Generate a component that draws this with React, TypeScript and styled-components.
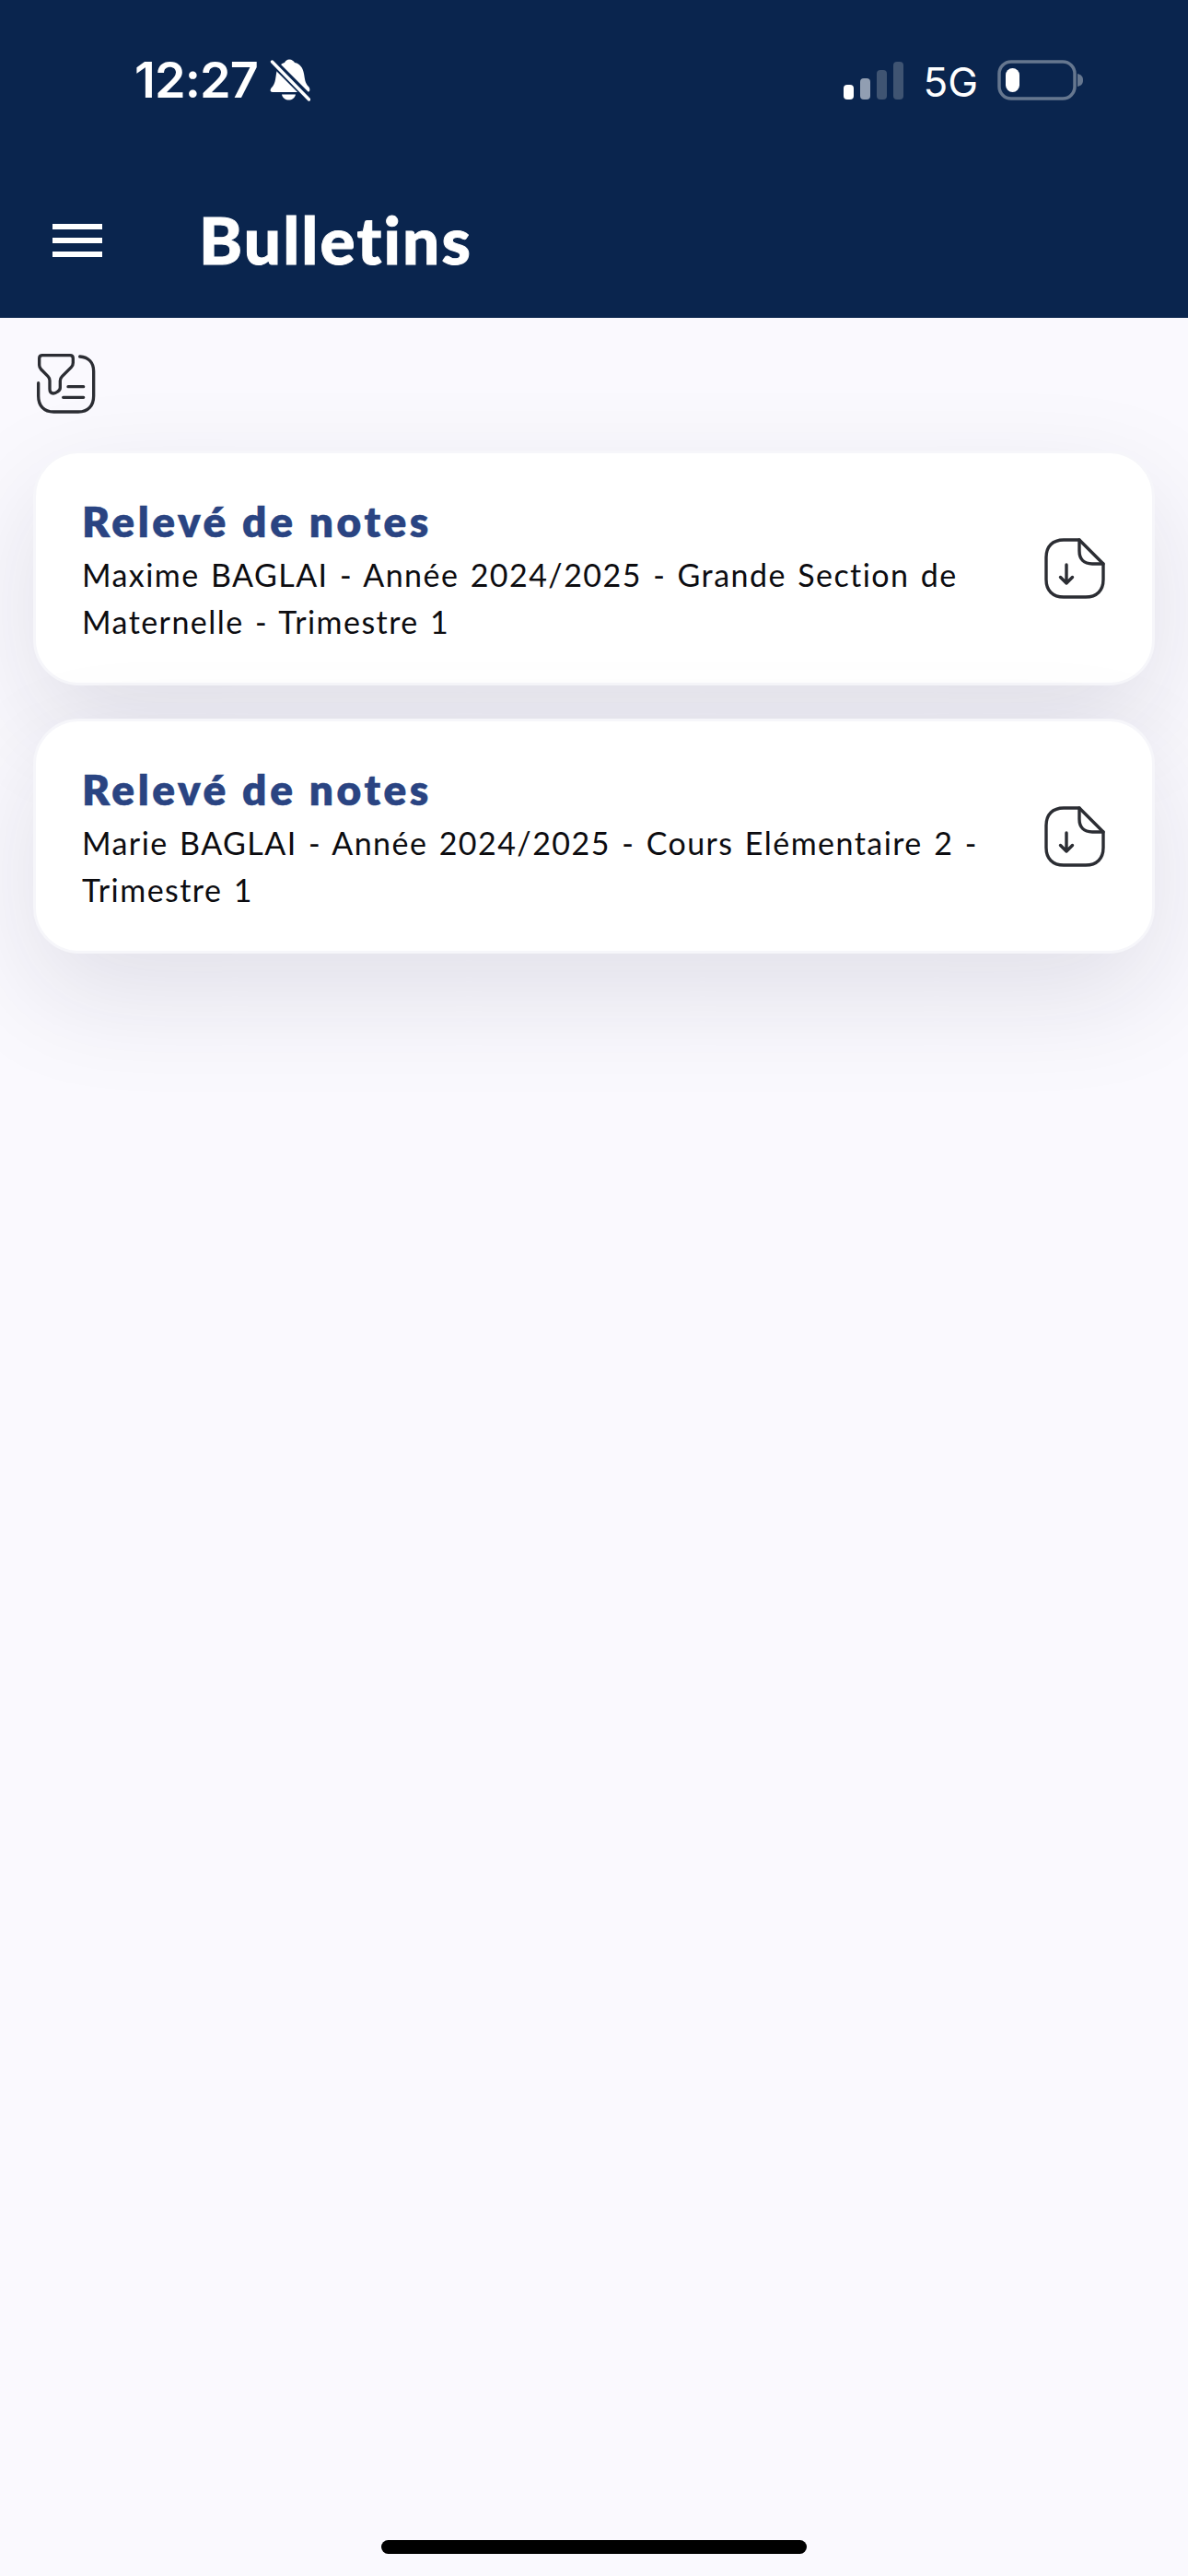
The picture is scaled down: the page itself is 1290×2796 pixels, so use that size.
import React from "react";
import styled, { createGlobalStyle } from "styled-components";

const Global = createGlobalStyle`
  html, body { margin: 0; padding: 0; background: #faf9fe; }
  body { font-family: "Lato", "Noto Sans", sans-serif; }
  * { box-sizing: border-box; }
`;

const Page = styled.div`
  width: 1290px;
  height: 2796px;
  display: flex;
  flex-direction: column;
  background: #faf9fe;
  overflow: hidden;
`;

const Header = styled.header`
  height: 345px;
  flex: none;
  background: #0a254e;
  display: flex;
  flex-direction: column;
`;

const StatusBar = styled.div`
  height: 172px;
  flex: none;
  padding: 60px 113px 0 146px;
  display: flex;
  justify-content: space-between;
  align-items: flex-start;
  color: #fff;
`;

const StatusGroup = styled.div`
  display: flex;
  align-items: center;
  height: 54px;
`;

const Time = styled.span`
  font-family: "Inter", sans-serif;
  font-size: 54px;
  font-weight: 600;
  line-height: 54px;
  letter-spacing: -0.9px;
  margin-right: 13px;
`;

const Signal = styled.div`
  display: flex;
  align-items: flex-end;
  gap: 7px;
  height: 42px;
  margin-right: 21px;
`;

const Bar = styled.span<{ $h: number; $c: string }>`
  width: 11px;
  height: ${(p) => p.$h}px;
  border-radius: 4px;
  background: ${(p) => p.$c};
`;

const Network = styled.span`
  font-family: "Inter", sans-serif;
  font-size: 44px;
  font-weight: 400;
  line-height: 54px;
  padding-top: 3px;
  margin-right: 21px;
`;

const Toolbar = styled.div`
  flex: 1;
  display: flex;
  align-items: flex-start;
  padding-top: 71px;
  padding-left: 57px;
`;

const Burger = styled.div`
  width: 54px;
  height: 36px;
  display: flex;
  flex-direction: column;
  justify-content: space-between;
  margin-right: 105px;
`;

const BurgerLine = styled.span`
  display: block;
  height: 6px;
  background: #fff;
`;

const Title = styled.h1`
  margin: -25px 0 0;
  color: #fff;
  font-family: "Lato", sans-serif;
  font-weight: 900;
  font-size: 71px;
  line-height: 84px;
  letter-spacing: 2.2px;
  -webkit-text-stroke: 1px #fff;
`;

const Main = styled.main`
  flex: 1;
  padding: 39px 36px 0;
  display: flex;
  flex-direction: column;
`;

const FilterButton = styled.div`
  width: 64px;
  height: 66px;
  margin: 0 0 39px 4px;
`;

const List = styled.div`
  display: flex;
  flex-direction: column;
  gap: 36px;
`;

const Card = styled.article`
  height: 255px;
  background: #fff;
  border: 3px solid #f6f6fa;
  border-radius: 50px;
  padding: 0 51px 0 50px;
  display: flex;
  align-items: center;
  justify-content: space-between;
  box-shadow: 0 44px 120px rgba(30, 30, 60, 0.115);
`;

const CardText = styled.div`
  width: 1000px;
  padding-top: 3px;
`;

const CardTitle = styled.div`
  color: #2a4482;
  font-weight: 800;
  font-size: 46px;
  line-height: 59px;
  letter-spacing: 3.6px;
  -webkit-text-stroke: 0.5px #2a4482;
`;

const CardSub = styled.div`
  color: #0c0c10;
  font-size: 34px;
  line-height: 51px;
  letter-spacing: 1.45px;
  word-spacing: 2.2px;
  margin-top: 3px;
`;

const HomeBar = styled.div`
  width: 462px;
  height: 15px;
  border-radius: 8px;
  background: #000;
  margin: 0 auto 24px;
  flex: none;
`;

const BellIcon = () => (
  <svg width="44" height="46" viewBox="0 0 44 46">
    <path
      d="M21 0.500c3 0 5 2 6 3.500 6 1 9 6 10 12 1 5 1 10 5 14 2 2 2 6-1 6H3c-3 0-3-3-1-5 4-4 4-9 5-15C8 9 12 5 16 4c1-2 3-3.500 5-3.500z"
      fill="#fff"
    />
    <path d="M13 38.500h15c-1 4-4 6-7.500 6s-6.500-2-7.500-6z" fill="#fff" />
    <path d="M0 0l44 44" stroke="#0a254e" strokeWidth="8.500" />
    <path d="M2.500 3l40 41" stroke="#fff" strokeWidth="3.400" strokeLinecap="round" />
  </svg>
);

const Battery = () => (
  <svg width="94" height="44" viewBox="0 0 94 44">
    <rect x="2" y="2" width="82" height="40" rx="13" fill="none" stroke="#66778f" strokeWidth="3.500" />
    <rect x="9" y="9" width="15" height="26" rx="7.500" fill="#fff" />
    <path d="M87 15c4 1 6 3 6 7s-2 6-6 7z" fill="#66778f" />
  </svg>
);

const FilterIcon = () => (
  <svg width="64" height="66" viewBox="60 44 192 196" fill="none" stroke="#2b2d33" strokeWidth="10" strokeLinecap="round" strokeLinejoin="round">
    <path d="M76 48h92q10 0 10 10v14q0 9-6 15l-30 30q-6 6-6 14v22q0 8-8 13q-8 6-14 6q-12 0-12-14v-28q0-8-6-14l-22-22q-6-6-6-14v-22q0-10 10-10z" />
    <path d="M200 52c28 2 45 20 45 48v80c0 32-18 52-50 52h-80c-32 0-50-20-50-52v-42" />
    <path d="M162 150h50M146 185h66" />
  </svg>
);

const DocIcon = () => (
  <svg width="66" height="66" viewBox="0 0 66 66" fill="none" stroke="#2b2d33" strokeWidth="3.400" strokeLinecap="round" strokeLinejoin="round">
    <path d="M38 2H21C9 2 2 9 2 21v24c0 12 7 19 19 19h24c12 0 19-7 19-19V28z" />
    <path d="M38 2v12c0 9 5 14 14 14h12" />
    <path d="M24 29v20M17.500 42.500L24 49l6.500-6.500" />
  </svg>
);

const cards = [
  "Maxime BAGLAI - Année 2024/2025 - Grande Section de Maternelle - Trimestre 1",
  "Marie BAGLAI - Année 2024/2025 - Cours Elémentaire 2 - Trimestre 1",
];

export default function App() {
  return (
    <Page>
      <Global />
      <Header>
        <StatusBar>
          <StatusGroup>
            <Time>12:27</Time>
            <BellIcon />
          </StatusGroup>
          <StatusGroup>
            <Signal>
              <Bar $h={16} $c="#fff" />
              <Bar $h={23} $c="#919eb2" />
              <Bar $h={32} $c="#3f5472" />
              <Bar $h={41} $c="#3f5472" />
            </Signal>
            <Network>5G</Network>
            <Battery />
          </StatusGroup>
        </StatusBar>
        <Toolbar>
          <Burger>
            <BurgerLine />
            <BurgerLine />
            <BurgerLine />
          </Burger>
          <Title>Bulletins</Title>
        </Toolbar>
      </Header>
      <Main>
        <FilterButton>
          <FilterIcon />
        </FilterButton>
        <List>
          {cards.map((c) => (
            <Card key={c}>
              <CardText>
                <CardTitle>Relevé de notes</CardTitle>
                <CardSub>{c}</CardSub>
              </CardText>
              <DocIcon />
            </Card>
          ))}
        </List>
      </Main>
      <HomeBar />
    </Page>
  );
}
